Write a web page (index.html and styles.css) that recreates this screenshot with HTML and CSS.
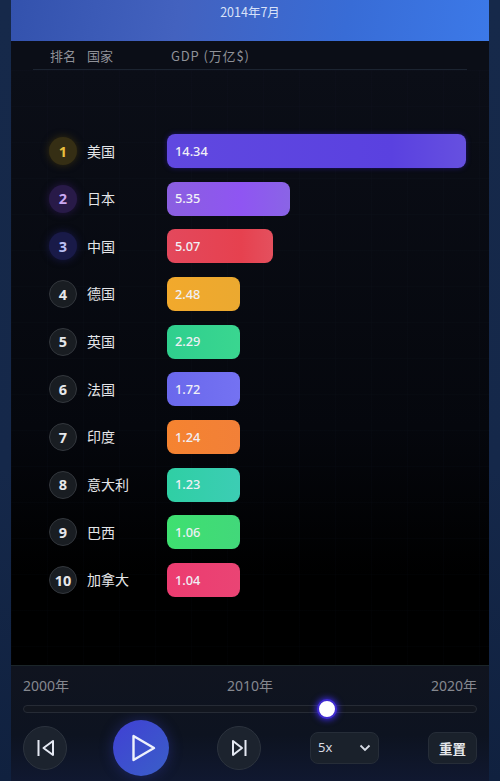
FILE: index.html
```html
<!DOCTYPE html>
<html lang="zh">
<head>
<meta charset="utf-8">
<title>GDP 排名</title>
<link rel="stylesheet" href="styles.css">
</head>
<body>
<div class="app">
  <header class="top"><span class="date">2014年7月</span></header>
  <div class="thead-wrap">
    <div class="thead">
      <span class="th-rank">排名</span><span class="th-country">国家</span><span class="th-gdp">GDP (万亿$)</span>
    </div>
  </div>
  <main class="chart">
    <div class="row"><span class="rank r1">1</span><span class="name">美国</span><div class="bar c1 w1">14.34</div></div>
    <div class="row"><span class="rank r2">2</span><span class="name">日本</span><div class="bar c2 w2">5.35</div></div>
    <div class="row"><span class="rank r3">3</span><span class="name">中国</span><div class="bar c3 w3">5.07</div></div>
    <div class="row"><span class="rank">4</span><span class="name">德国</span><div class="bar c4 w4">2.48</div></div>
    <div class="row"><span class="rank">5</span><span class="name">英国</span><div class="bar c5 w4">2.29</div></div>
    <div class="row"><span class="rank">6</span><span class="name">法国</span><div class="bar c6 w4">1.72</div></div>
    <div class="row"><span class="rank">7</span><span class="name">印度</span><div class="bar c7 w4">1.24</div></div>
    <div class="row"><span class="rank">8</span><span class="name">意大利</span><div class="bar c8 w4">1.23</div></div>
    <div class="row"><span class="rank">9</span><span class="name">巴西</span><div class="bar c9 w4">1.06</div></div>
    <div class="row"><span class="rank">10</span><span class="name">加拿大</span><div class="bar c10 w4">1.04</div></div>
  </main>
  <footer class="foot">
    <div class="years"><span>2000年</span><span>2010年</span><span>2020年</span></div>
    <div class="track"><span class="knob"></span></div>
    <div class="controls">
      <button class="round" aria-label="上一个">
        <svg width="18" height="18" viewBox="0 0 18 18" fill="none" stroke="#e4e8f2" stroke-width="2"><path d="M2.500 1v16"/><path d="M17 2 7.500 9l9.500 7z" stroke-linejoin="round"/></svg>
      </button>
      <button class="play" aria-label="播放">
        <svg width="26" height="28" viewBox="0 0 26 28" fill="none" stroke="#eef1fb" stroke-width="2.400" stroke-linejoin="round"><path d="M3.500 2v24L24 14z"/></svg>
      </button>
      <button class="round" aria-label="下一个">
        <svg width="18" height="18" viewBox="0 0 18 18" fill="none" stroke="#e4e8f2" stroke-width="2"><path d="M15.500 1v16"/><path d="M3 2l9 7-9 7z" stroke-linejoin="round"/></svg>
      </button>
      <div class="speed"><span>5x</span>
        <svg width="12" height="8" viewBox="0 0 12 8" fill="none" stroke="#d8dce6" stroke-width="1.800"><path d="M1.500 1.500 6 6l4.500-4.500"/></svg>
      </div>
      <button class="reset">重置</button>
    </div>
  </footer>
</div>
</body>
</html>
```
FILE: styles.css
```css
* { box-sizing: border-box; }
html, body { margin: 0; height: 100%; }
body {
  background: linear-gradient(180deg, #16294a 0%, #15284a 60%, #10213f 100%);
  font-family: "Noto Sans CJK SC", "Noto Sans", sans-serif;
  overflow: hidden;
}
.app {
  width: 478px;
  height: 781px;
  margin: 0 auto;
  display: flex;
  flex-direction: column;
  background: #000;
}
.top {
  height: 41px;
  flex: none;
  display: flex;
  justify-content: center;
  padding-top: 3px;
  background: linear-gradient(100deg, #3352ad 0%, #4362bf 35%, #386cd6 70%, #3c79e8 100%);
}
.date { font-size: 12.500px; line-height: 18px; color: #d8e2f8; }
.thead-wrap {
  flex: none;
  padding: 0 22px;
  background: #0b0e17;
}
.thead {
  height: 29px;
  padding: 5px 0 0 17px;
  display: flex;
  align-items: flex-start;
  border-bottom: 1px solid #1c2431;
  color: #8f9198;
  font-size: 13px;
  line-height: 20px;
}
.th-rank { width: 37px; }
.th-country { width: 84px; }
.th-gdp { letter-spacing: .85px; }
.chart {
  flex: 1;
  display: flex;
  flex-direction: column;
  gap: 13.670px;
  padding: 64px 0 0 38px;
  background:
    linear-gradient(rgba(40,60,100,.04) 1px, transparent 1px) 0 0 / 36px 36px,
    linear-gradient(90deg, rgba(40,60,100,.04) 1px, transparent 1px) 0 0 / 36px 36px,
    linear-gradient(180deg, #0b0e17 0%, #05070d 60%, #000 85%);
}
.row { display: flex; align-items: center; height: 34px; flex: none; }
.rank {
  width: 28px;
  height: 28px;
  flex: none;
  margin-right: 10px;
  border-radius: 50%;
  display: flex;
  align-items: center;
  justify-content: center;
  font: 700 14.500px/1 "Noto Sans", sans-serif;
  color: #e6e7ea;
  background: #191d22;
  border: 1.500px solid #33373d;
}
.r1 { color: #e9bf3e; background: #352e14; border: 0; box-shadow: 0 0 7px 1px #2c2610; }
.r2 { color: #c9a8f2; background: #281a48; border: 0; box-shadow: 0 0 7px 1px #20143c; }
.r3 { color: #bcc0f5; background: #191a48; border: 0; box-shadow: 0 0 7px 1px #14153c; }
.name {
  width: 80px;
  flex: none;
  margin-top: -1px;
  font-size: 14px;
  line-height: 20px;
  color: #e4e5e8;
  white-space: nowrap;
}
.bar {
  height: 34px;
  border-radius: 8px;
  padding-left: 8px;
  display: flex;
  align-items: center;
  font: 500 12.800px/1 "Noto Sans", sans-serif;
  color: #f0f0f6;
}
.w1 { width: 299px; }
.w2 { width: 123px; }
.w3 { width: 106px; }
.w4 { width: 73px; }
.c1 { background: linear-gradient(90deg, #6048e0, #5a41e0 75%, #6650e0); box-shadow: 0 0 5px #1f1470; }
.c2 { background: linear-gradient(90deg, #8a5fe0, #8f55f2 60%, #8a64e6); }
.c3 { background: linear-gradient(90deg, #e3485c, #e6414f 70%, #e4505e); }
.c4 { background: linear-gradient(90deg, #f2a92c, #eba930); }
.c5 { background: linear-gradient(90deg, #2fcf8e, #3ad690); }
.c6 { background: linear-gradient(90deg, #6a68ec, #7472f2); }
.c7 { background: linear-gradient(90deg, #f58330, #f28038); }
.c8 { background: linear-gradient(90deg, #2fcfa4, #3ccdb4); }
.c9 { background: linear-gradient(90deg, #3ee070, #42d87a); }
.c10 { background: linear-gradient(90deg, #ec3c70, #ea4474); }
.foot {
  height: 116px;
  flex: none;
  padding: 10px 12px 0;
  background: linear-gradient(180deg, #10141f 0%, #0d1320 60%, #101830 100%);
  border-top: 1px solid #1b2529;
}
.years {
  display: flex;
  justify-content: space-between;
  color: #85888f;
  font-family: "Noto Sans", "Noto Sans CJK SC", sans-serif;
  font-size: 14px;
  line-height: 20px;
}
.track {
  position: relative;
  height: 8px;
  margin-top: 9px;
  border-radius: 4px;
  background: #12161f;
  border: 1px solid #262b35;
}
.knob {
  position: absolute;
  left: 293px;
  top: -7px;
  width: 20px;
  height: 20px;
  border-radius: 50%;
  background: #fff;
  border: 2px solid #3f2bd0;
  box-shadow: 0 0 6px 1px #3a2ad8;
}
.controls {
  display: flex;
  align-items: center;
  margin-top: 6px;
}
button { padding: 0; font-family: inherit; cursor: pointer; }
.round {
  width: 44px;
  height: 44px;
  flex: none;
  border-radius: 50%;
  display: flex;
  align-items: center;
  justify-content: center;
  background: #1c232e;
  border: 1.500px solid #2c333e;
}
.play {
  width: 56px;
  height: 56px;
  flex: none;
  margin: 1px 48px 0 46px;
  padding-left: 4px;
  border: 0;
  border-radius: 50%;
  display: flex;
  align-items: center;
  justify-content: center;
  background: linear-gradient(135deg, #4040d4, #3a5fc8);
  box-shadow: 0 0 14px rgba(60,70,210,.35);
}
.speed {
  width: 69px;
  height: 32px;
  flex: none;
  margin-left: 49px;
  padding: 0 7px;
  border-radius: 8px;
  display: flex;
  align-items: center;
  justify-content: space-between;
  background: #1a212b;
  border: 1.500px solid #262d38;
  color: #d8dbe2;
  font: 400 13px/1 "Noto Sans", sans-serif;
}
.reset {
  width: 49px;
  height: 32px;
  flex: none;
  margin-left: auto;
  border-radius: 8px;
  background: #1a212b;
  border: 1.500px solid #262d38;
  color: #e6e8ec;
  font-size: 13.500px;
  font-weight: 700;
}
```
